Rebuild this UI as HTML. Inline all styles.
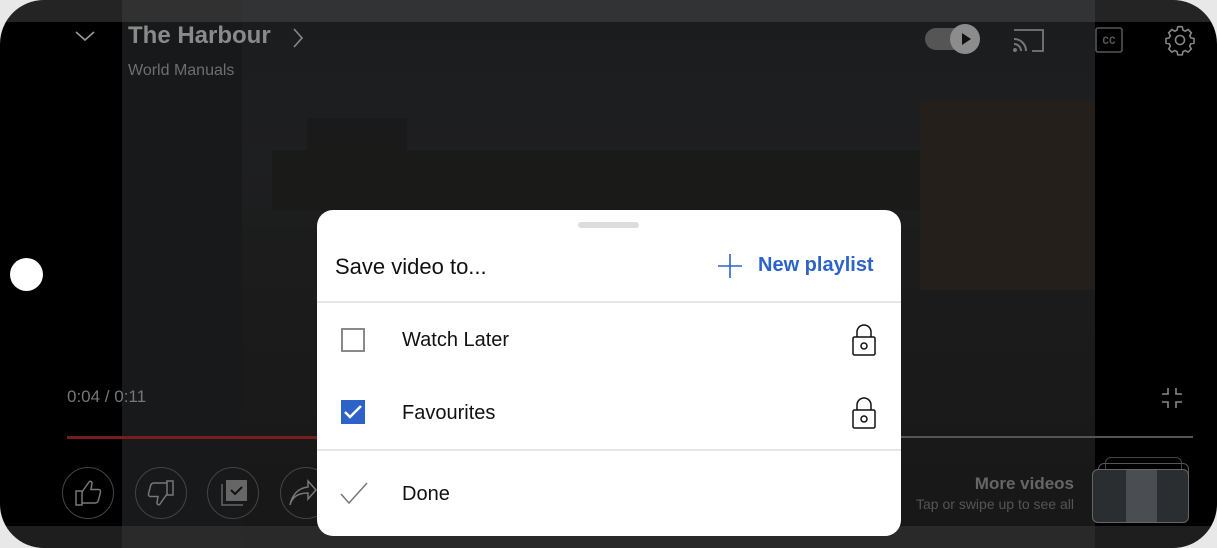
<!DOCTYPE html>
<html><head><meta charset="utf-8"><style>
*{margin:0;padding:0;box-sizing:border-box}
body{width:1217px;height:548px;background:#e8e8e8;overflow:hidden;position:relative;font-family:"Liberation Sans",Roboto,sans-serif}
.phone{position:absolute;left:0;top:0;width:1217px;height:548px;background:#000;border-radius:44px;overflow:hidden}
.video{position:absolute;left:122px;top:0;width:973px;height:548px;background:linear-gradient(180deg,#1b1c1e 0%,#1e1f21 30%,#1c1c1c 45%,#1a1a1a 70%,#171717 100%)}
.abs{position:absolute}
</style></head><body>
<div class="phone">
  <div class="video">
    <div class="abs" style="left:0;top:0;width:120px;height:548px;background:#18191a"></div>
    <div class="abs" style="left:185px;top:118px;width:100px;height:60px;background:#1a1a1a"></div>
    <div class="abs" style="left:420px;top:172px;width:145px;height:40px;background:#333436"></div>
    <div class="abs" style="left:150px;top:150px;width:823px;height:60px;background:#1a1a19"></div>
    <div class="abs" style="left:798px;top:100px;width:175px;height:190px;background:#241f1b"></div>
  </div>
  <div class="abs" style="left:0;top:0;width:1217px;height:22px;background:rgba(80,80,80,.45)"></div>
  <div class="abs" style="left:0;top:526px;width:1217px;height:22px;background:rgba(60,60,60,.5)"></div>
  <svg class="abs" style="left:74px;top:28px" width="22" height="16"><path d="M2 4 L11 12 L20 4" stroke="#999" stroke-width="1.6" fill="none"/></svg>
  <div class="abs" style="left:128px;top:22px;font-size:24px;font-weight:bold;color:#8a8a8a">The Harbour</div>
  <svg class="abs" style="left:290px;top:26px" width="16" height="24"><path d="M4 3 L12 12 L4 21" stroke="#888" stroke-width="1.6" fill="none"/></svg>
  <div class="abs" style="left:128px;top:62px;font-size:16px;color:#6e6e6e">World Manuals</div>
  <div class="abs" style="left:925px;top:28px;width:44px;height:22px;border-radius:11px;background:#555"></div>
  <div class="abs" style="left:950px;top:24px;width:30px;height:30px;border-radius:50%;background:#8c8c8c"></div>
  <svg class="abs" style="left:950px;top:24px" width="30" height="30"><path d="M12 9 L21 15 L12 21Z" fill="#111"/></svg>
  <svg class="abs" style="left:1010px;top:26px" width="36" height="28"><path d="M4 4 H33 V25 H22" stroke="#777" stroke-width="1.8" fill="none"/><path d="M4 13 a12 12 0 0 1 12 12 M4 18 a7 7 0 0 1 7 7" stroke="#777" stroke-width="2" fill="none"/><circle cx="5" cy="24" r="2" fill="#777"/></svg>
  <svg class="abs" style="left:1095px;top:27px" width="28" height="26"><rect x="1" y="1" width="26" height="24" rx="2" stroke="#555" stroke-width="1.6" fill="none"/><text x="14" y="17" font-size="11" font-weight="bold" fill="#555" text-anchor="middle" font-family="Liberation Mono">CC</text></svg>
  <svg class="abs" style="left:1163px;top:23px" width="34" height="34" viewBox="0 0 24 24"><path d="M12 2.5l1.6.2.5 2.3 1.6.8 2-1.2 2.3 2.3-1.2 2 .8 1.6 2.3.5v3.2l-2.3.5-.8 1.6 1.2 2-2.3 2.3-2-1.2-1.6.8-.5 2.3h-3.2l-.5-2.3-1.6-.8-2 1.2-2.3-2.3 1.2-2-.8-1.6-2.3-.5v-3.2l2.3-.5.8-1.6-1.2-2 2.3-2.3 2 1.2 1.6-.8.5-2.3z" stroke="#888" stroke-width="1.1" fill="none"/><circle cx="12" cy="12" r="3.2" stroke="#888" stroke-width="1.1" fill="none"/></svg>
  <div class="abs" style="left:10px;top:258px;width:33px;height:33px;border-radius:50%;background:#fff"></div>
  <div class="abs" style="left:67px;top:387px;font-size:17px;color:#777">0:04 / 0:11</div>
  <div class="abs" style="left:67px;top:436px;width:260px;height:3px;background:#7a1c1c"></div>
  <div class="abs" style="left:900px;top:436px;width:293px;height:2px;background:#555"></div>
  <svg class="abs" style="left:1160px;top:386px" width="24" height="24"><path d="M8 2v6H2M16 2v6h6M8 22v-6H2M16 22v-6h6" stroke="#888" stroke-width="1.6" fill="none"/></svg>
  <div class="abs" style="left:62px;top:467px;width:52px;height:52px;border-radius:50%;border:1px solid #444"></div>
  <div class="abs" style="left:135px;top:467px;width:52px;height:52px;border-radius:50%;border:1px solid #444"></div>
  <div class="abs" style="left:207px;top:467px;width:52px;height:52px;border-radius:50%;border:1px solid #444"></div>
  <div class="abs" style="left:280px;top:467px;width:52px;height:52px;border-radius:50%;border:1px solid #444"></div>
  <svg class="abs" style="left:62px;top:467px" width="52" height="52"><path d="M14 24h6v14h-6zM20 36h13c2 0 3-1 3.5-3l2-8c.3-1.5-.7-2.5-2-2.5H29l1-6c.3-2-2-3-3-1.5L20 25" stroke="#777" stroke-width="1.5" fill="none"/></svg>
  <svg class="abs" style="left:135px;top:467px" width="52" height="52"><path d="M38 28h-6V14h6zM32 16H19c-2 0-3 1-3.5 3l-2 8c-.3 1.5.7 2.5 2 2.5H23l-1 6c-.3 2 2 3 3 1.5L32 27" stroke="#777" stroke-width="1.5" fill="none"/></svg>
  <svg class="abs" style="left:207px;top:467px" width="52" height="52"><rect x="19" y="13" width="21" height="21" fill="#666"/><path d="M15 17v21h21" stroke="#666" stroke-width="1.5" fill="none"/><path d="M24 23l4 4 7-7" stroke="#111" stroke-width="2" fill="none"/></svg>
  <svg class="abs" style="left:280px;top:467px" width="40" height="52"><path d="M10 38c2-8 8-12 18-12v6l8-9-8-9v6c-10 1-16 8-18 18z" stroke="#777" stroke-width="1.5" fill="none"/></svg>
  <div class="abs" style="left:900px;top:474px;width:174px;text-align:right;font-size:17px;font-weight:bold;color:#666">More videos</div>
  <div class="abs" style="left:880px;top:496px;width:194px;text-align:right;font-size:14px;color:#555">Tap or swipe up to see all</div>
  <div class="abs" style="left:1105px;top:457px;width:77px;height:20px;border:1px solid #444;border-radius:6px"></div>
  <div class="abs" style="left:1098px;top:463px;width:91px;height:20px;border:1px solid #555;border-radius:6px"></div>
  <div class="abs" style="left:1092px;top:469px;width:97px;height:54px;border:1.5px solid #666;border-radius:6px;background:#2b2e30;overflow:hidden"><div style="margin-left:33px;width:31px;height:54px;background:#4a4e52"></div></div>
  <div class="abs" style="left:317px;top:210px;width:584px;height:326px;background:#fff;border-radius:16px">
    <div class="abs" style="left:261px;top:12px;width:61px;height:6px;border-radius:3px;background:#ddd"></div>
    <div class="abs" style="left:18px;top:44px;font-size:22px;color:#111">Save video to...</div>
    <svg class="abs" style="left:398px;top:41px" width="30" height="30"><path d="M15 3v24M3 15h24" stroke="#2d63c8" stroke-width="1.6"/></svg>
    <div class="abs" style="left:441px;top:44px;font-size:20px;font-weight:bold;color:#2d63c8">New playlist</div>
    <div class="abs" style="left:0;top:91px;width:584px;height:2px;background:#e6e6e6"></div>
    <div class="abs" style="left:24px;top:118px;width:24px;height:24px;border:2px solid #8a8a8a"></div>
    <div class="abs" style="left:85px;top:119px;font-size:20px;color:#111">Watch Later</div>
    <svg class="abs" style="left:534px;top:113px" width="26" height="34"><path d="M6 14V9a7 7 0 0 1 14 0v5" stroke="#111" stroke-width="1.5" fill="none"/><rect x="2" y="14" width="22" height="18" rx="1.5" stroke="#111" stroke-width="1.5" fill="none"/><circle cx="13" cy="23" r="3" stroke="#111" stroke-width="1.5" fill="none"/></svg>
    <div class="abs" style="left:24px;top:190px;width:24px;height:24px;background:#2d63c8"></div>
    <svg class="abs" style="left:24px;top:190px" width="24" height="24"><path d="M4 12l5 5 11-11" stroke="#fff" stroke-width="2.5" fill="none"/></svg>
    <div class="abs" style="left:85px;top:192px;font-size:20px;color:#111">Favourites</div>
    <svg class="abs" style="left:534px;top:186px" width="26" height="34"><path d="M6 14V9a7 7 0 0 1 14 0v5" stroke="#111" stroke-width="1.5" fill="none"/><rect x="2" y="14" width="22" height="18" rx="1.5" stroke="#111" stroke-width="1.5" fill="none"/><circle cx="13" cy="23" r="3" stroke="#111" stroke-width="1.5" fill="none"/></svg>
    <div class="abs" style="left:0;top:239px;width:584px;height:2px;background:#e6e6e6"></div>
    <svg class="abs" style="left:22px;top:270px" width="30" height="26"><path d="M2 14l8 9L28 3" stroke="#777" stroke-width="1.5" fill="none"/></svg>
    <div class="abs" style="left:85px;top:273px;font-size:20px;color:#111">Done</div>
  </div>
</div>
</body></html>
